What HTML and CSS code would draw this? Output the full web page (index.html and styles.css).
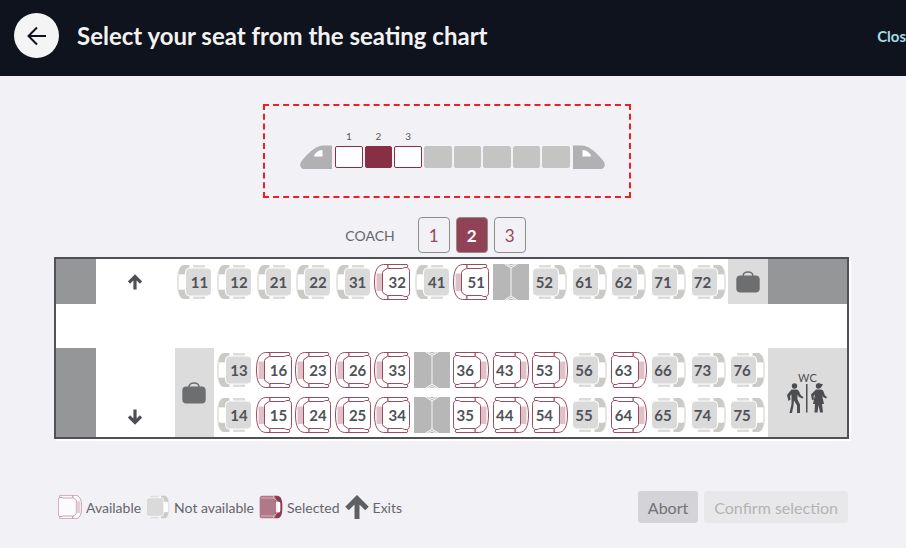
FILE: index.html
```
<!DOCTYPE html>
<html lang="en">
<head>
<meta charset="utf-8">
<title>Select your seat</title>
<link rel="stylesheet" href="styles.css">
</head>
<body>
<svg class="symbols" aria-hidden="true">
  <symbol id="free" viewBox="0 0 36 36">
    <g fill="#fff" stroke="#9c4a60" stroke-width="1">
      <path d="M22 .5h4.500C32 1 35.500 6 35.500 18S32 35 26.500 35.500H22z"/>
      <path d="M4 3.500h18c.5 2 5.500 2.500 5.500 5v19c0 2.500-5 3-5.500 5H4C1.500 32.500.5 31 .5 28.500v-21C.5 5 1.500 3.500 4 3.500z"/>
      <path d="M3 .5h19v4H7.500C6.500 4.500 6.500 3.500 5.500 3.500H3c-1 0-1-3 0-3zM3 35.500h19v-4H7.500c-1 0-1 1-2 1H3c-1 0-1 3 0 3z"/>
    </g>
    <rect x="28" y="9.500" width="5.500" height="17.500" rx="1" fill="#dfc1c8"/>
  </symbol>
  <symbol id="taken" viewBox="0 0 36 36">
    <path d="M23 1h5C34 2 35 9 35 18S34 34 28 35h-5z" fill="#e4e5e1"/>
    <path d="M22.500 1h6c3.500 1 4.500 5 5 9h-1v16h1c-.5 4-1.500 8-5 9h-6v-5l5-4V10l-5-4z" fill="#cacbc6"/>
    <path d="M27 10.500q6-1 6 1v13q0 2-6 1z" fill="#fff"/>
    <path d="M7 1h12v3H7zM7 32h12v3H7z" fill="#dcdcda"/>
    <rect x=".5" y="4" width="26" height="28" rx="4" fill="#dadada" stroke="#fff"/>
  </symbol>
  <symbol id="chosen" viewBox="0 0 36 36">
    <path d="M22 1h6C34 2 35 9 35 18S34 34 28 35h-6z" fill="#8d3a50"/>
    <path d="M25 10q7-1 7 2v12q0 3-7 2z" fill="#fff"/>
    <rect x="1" y="1" width="24" height="34" rx="4" fill="#b17987"/>
    <path d="M3 4.500h19l5 4v19l-5 4H3M22 1v4M22 31v4" fill="none" stroke="#e8cdd4"/>
  </symbol>
  <symbol id="table" viewBox="0 0 36 36">
    <path d="M0 0h36v36H0z" fill="#b7b7b7"/>
    <path d="M11.500 0 18 4l6.500-4M18 4v28M11.500 36l6.500-4 6.500 4M14 0l4 2 4-2M14 36l4-2 4 2" fill="none" stroke="#fff" stroke-width=".9"/>
  </symbol>
  <symbol id="bag" viewBox="0 0 24 23">
    <path d="M7 6C7 .5 17 .5 17 6" fill="none" stroke="#6d6e70" stroke-width="1.500"/>
    <rect x=".3" y="5.500" width="23.400" height="17" rx="4" fill="#6d6e70"/>
  </symbol>
  <symbol id="arrow" viewBox="0 0 14 16">
    <path d="M7 15.500V3M1 8.500l6-6 6 6" fill="none" stroke="currentColor" stroke-width="3.200"/>
  </symbol>
  <symbol id="nose" viewBox="0 0 32 24">
    <path d="M32 .5H23C15 .5 5 11 1 17c-2 4 0 7 3 7h28z" fill="#b1b1b3"/>
    <path d="M22.500 5v6.500h-8.500c0-3 4.500-6.500 8.500-6.500z" fill="#fff"/>
  </symbol>
</svg>

<header class="topbar">
  <button class="back" aria-label="Back">
    <svg viewBox="0 0 20 20"><path d="M19 10H2M10 1.500 1.500 10l8.500 8.500" fill="none" stroke="#0f131d" stroke-width="2"/></svg>
  </button>
  <h1>Select your seat from the seating chart</h1>
  <a class="close" href="#">Close</a>
</header>

<main>
  <div class="overview">
    <section class="frame" aria-label="Train overview">
      <div class="train">
        <svg class="nose"><use href="#nose"/></svg>
        <div class="cars">
          <span class="car open"><b>1</b></span>
          <span class="car current"><b>2</b></span>
          <span class="car open"><b>3</b></span>
          <span class="car"></span><span class="car"></span><span class="car"></span><span class="car"></span><span class="car"></span>
        </div>
        <svg class="nose tail"><use href="#nose"/></svg>
      </div>
    </section>
  </div>

  <nav class="coaches">
    <span>COACH</span>
    <button>1</button><button class="active">2</button><button>3</button>
  </nav>

  <section class="plan" aria-label="Coach 2">
    <div class="wall"></div>
    <div class="exit"><svg><use href="#arrow"/></svg></div>
    <button class="seat flip" disabled><svg><use href="#taken"/></svg><span>11</span></button>
    <button class="seat flip" disabled><svg><use href="#taken"/></svg><span>12</span></button>
    <button class="seat flip" disabled><svg><use href="#taken"/></svg><span>21</span></button>
    <button class="seat flip" disabled><svg><use href="#taken"/></svg><span>22</span></button>
    <button class="seat flip" disabled><svg><use href="#taken"/></svg><span>31</span></button>
    <button class="seat flip"><svg><use href="#free"/></svg><span>32</span></button>
    <button class="seat flip" disabled><svg><use href="#taken"/></svg><span>41</span></button>
    <button class="seat flip"><svg><use href="#free"/></svg><span>51</span></button>
    <div class="table"><svg><use href="#table"/></svg></div>
    <button class="seat" disabled><svg><use href="#taken"/></svg><span>52</span></button>
    <button class="seat" disabled><svg><use href="#taken"/></svg><span>61</span></button>
    <button class="seat" disabled><svg><use href="#taken"/></svg><span>62</span></button>
    <button class="seat" disabled><svg><use href="#taken"/></svg><span>71</span></button>
    <button class="seat" disabled><svg><use href="#taken"/></svg><span>72</span></button>
    <div class="luggage"><svg><use href="#bag"/></svg></div>
    <div class="wall wide"></div>

    <div class="aisle"></div>

    <div class="wall tall"></div>
    <div class="exit tall down"><svg><use href="#arrow"/></svg></div>
    <div class="luggage tall"><svg><use href="#bag"/></svg></div>
    <button class="seat flip" disabled><svg><use href="#taken"/></svg><span>13</span></button>
    <button class="seat flip"><svg><use href="#free"/></svg><span>16</span></button>
    <button class="seat flip"><svg><use href="#free"/></svg><span>23</span></button>
    <button class="seat flip"><svg><use href="#free"/></svg><span>26</span></button>
    <button class="seat flip"><svg><use href="#free"/></svg><span>33</span></button>
    <div class="table"><svg><use href="#table"/></svg></div>
    <button class="seat"><svg><use href="#free"/></svg><span>36</span></button>
    <button class="seat"><svg><use href="#free"/></svg><span>43</span></button>
    <button class="seat"><svg><use href="#free"/></svg><span>53</span></button>
    <button class="seat" disabled><svg><use href="#taken"/></svg><span>56</span></button>
    <button class="seat"><svg><use href="#free"/></svg><span>63</span></button>
    <button class="seat" disabled><svg><use href="#taken"/></svg><span>66</span></button>
    <button class="seat" disabled><svg><use href="#taken"/></svg><span>73</span></button>
    <button class="seat" disabled><svg><use href="#taken"/></svg><span>76</span></button>
    <div class="wc tall">
      <span>WC</span>
      <svg viewBox="0 0 40 30" fill="#4c4d50">
        <circle cx="7.500" cy="3" r="2.700"/>
        <path d="M4.500 6.500h5c1.500 0 2 1 2.500 2l2 4 2.500 1.500-1 1.500-3.500-1.500-1.500-2.500v5l2.500 5v8.500h-3v-7.500l-3-5-.5 5-1.500 7.500H2.500l2-9V11.500L3 13l.5 3.500L1.500 18 0 12z"/>
        <path d="M19 1h1.500v28.500H19z"/>
        <circle cx="31.500" cy="3" r="2.700"/><path d="m31 .3 5 1-1.500 2.500-3-.5z"/>
        <path d="M29 6.500h5c1.500 0 2 1 2.500 2l1.500 4 2 1.500-1 1.500-3-1.500-1-2 2 9h-2l1 8.500h-3l-1.500-7.500-1 7.500h-3l.5-8.500h-2l2-9.500-1.500 1.500.5 3.500-2 .5-1-5.500z"/>
      </svg>
    </div>

    <button class="seat flip" disabled><svg><use href="#taken"/></svg><span>14</span></button>
    <button class="seat flip"><svg><use href="#free"/></svg><span>15</span></button>
    <button class="seat flip"><svg><use href="#free"/></svg><span>24</span></button>
    <button class="seat flip"><svg><use href="#free"/></svg><span>25</span></button>
    <button class="seat flip"><svg><use href="#free"/></svg><span>34</span></button>
    <div class="table"><svg><use href="#table"/></svg></div>
    <button class="seat"><svg><use href="#free"/></svg><span>35</span></button>
    <button class="seat"><svg><use href="#free"/></svg><span>44</span></button>
    <button class="seat"><svg><use href="#free"/></svg><span>54</span></button>
    <button class="seat" disabled><svg><use href="#taken"/></svg><span>55</span></button>
    <button class="seat"><svg><use href="#free"/></svg><span>64</span></button>
    <button class="seat" disabled><svg><use href="#taken"/></svg><span>65</span></button>
    <button class="seat" disabled><svg><use href="#taken"/></svg><span>74</span></button>
    <button class="seat" disabled><svg><use href="#taken"/></svg><span>75</span></button>
  </section>

  <footer class="bottom">
    <ul class="legend">
      <li class="faded"><svg><use href="#free"/></svg>Available</li>
      <li><svg><use href="#taken"/></svg>Not available</li>
      <li><svg><use href="#chosen"/></svg>Selected</li>
      <li><svg viewBox="0 0 24 24"><path d="M12 24V4M2 13.500 12 3.500l10 10" fill="none" stroke="#5f6064" stroke-width="5"/></svg>Exits</li>
    </ul>
    <div class="actions">
      <button class="abort">Abort</button>
      <button class="confirm" disabled>Confirm selection</button>
    </div>
  </footer>
</main>
</body>
</html>
```
FILE: styles.css
```
* { box-sizing: border-box; }
body {
  margin: 0;
  background: #f2f1f6;
  color: #66666a;
  font-family: Lato, "Open Sans", sans-serif;
  font-size: 15px;
}
button { font: inherit; padding: 0; border: 0; background: none; }
svg { display: block; }
.symbols { position: absolute; width: 0; height: 0; }

.topbar {
  display: flex;
  align-items: center;
  height: 76px;
  padding: 0 0 5px 14px;
  background: #0f131d;
  overflow: hidden;
}
.back {
  display: grid;
  place-items: center;
  width: 45px;
  height: 45px;
  border-radius: 50%;
  background: #f4f4f4;
}
.back svg { width: 20px; height: 20px; }
h1 {
  margin: 0 0 0 18px;
  color: #f2f2f2;
  font-size: 24px;
  line-height: 28px;
  font-weight: 700;
}
/* The link runs off the right edge of the bar. */
.close {
  margin: 0 -8px 0 auto;
  color: #a3dce6;
  font-weight: 700;
  text-decoration: none;
}

main { padding: 28px 57px 0 54px; }

.overview { padding-right: 9px; }
.frame {
  max-width: 368px;
  margin: 0 auto;
  padding: 39px 24px 27px 35px;
  border: 2px dashed #ec1f28;
}
.train { display: flex; align-items: center; gap: 3px; }
.nose { width: 32px; height: 24px; }
.tail { transform: scaleX(-1); }
.cars { display: grid; grid-template-columns: repeat(8, 1fr); gap: 2px; flex: 1; }
.car {
  position: relative;
  height: 22px;
  border: 1px solid #c4c4c2;
  border-radius: 2px;
  background: #c4c4c2;
}
.car b {
  position: absolute;
  left: 0;
  right: 0;
  bottom: 25px;
  color: #58585c;
  font-size: 10px;
  line-height: 12px;
  font-weight: 400;
  text-align: center;
}
.open { background: #fff; border-color: #882f46; }
.current { background: #882f46; border-color: #882f46; }

.coaches {
  display: flex;
  justify-content: center;
  align-items: center;
  gap: 6px;
  padding: 19px 32px 4px 0;
}
.coaches span { margin-right: 17px; font-size: 14px; }
.coaches button {
  width: 32px;
  height: 36px;
  border: 1px solid #8d8f86;
  border-radius: 4px;
  color: #96475b;
  font-size: 17px;
}
.coaches .active { background: #924256; color: #fff; font-weight: 700; }

.plan {
  display: grid;
  grid-template-columns: repeat(20, 1fr);
  grid-template-rows: 45px 44px 44px 45px;
  border: 2px solid #505056;
  background: #fff;
  box-shadow: 2px 2px #fff;
}
.plan > * { display: grid; place-items: center; min-width: 0; }
.wall { background: #959698; }
.wide { grid-column: span 2; }
.tall { grid-row: span 2; }
.exit { grid-column: span 2; color: #4e4f53; }
.exit svg { width: 14px; height: 16px; }
.down { align-items: end; padding-bottom: 12px; }
.down svg { transform: scaleY(-1); }
.aisle { grid-column: 1 / -1; }
.luggage { background: #dcdcdc; }
.luggage svg { width: 24px; height: 23px; }
.seat > *, .table > * { grid-area: 1 / 1; }
.seat svg, .table svg { width: 36px; height: 36px; }
.seat span {
  z-index: 1;
  padding-right: 12px;
  color: #505257;
  font-size: 15px;
  line-height: 18px;
  font-weight: 700;
}
.flip svg { transform: scaleX(-1); }
.seat.flip span { padding: 0 0 0 10px; }
.plan .wc {
  grid-column: span 2;
  align-content: center;
  background: #dcdcdc;
  color: #4c4d50;
  font-size: 11px;
  line-height: 11px;
}
.wc svg { width: 40px; height: 30px; }

.bottom {
  display: flex;
  justify-content: space-between;
  align-items: center;
  padding: 52px 1px 0 4px;
}
.legend { display: flex; gap: 5px; margin: 0; padding: 0; list-style: none; font-size: 14px; }
.legend li { display: flex; align-items: center; gap: 4px; }
.legend svg { width: 24px; height: 24px; }
.faded svg { opacity: .7; }
.actions { display: flex; gap: 6px; font-size: 16px; }
.actions button { height: 32px; padding: 0 10px; border-radius: 3px; }
.abort { background: #d4d3d8; color: #727276; }
.confirm { background: #e8e8ea; color: #b4b4b3; }
```
